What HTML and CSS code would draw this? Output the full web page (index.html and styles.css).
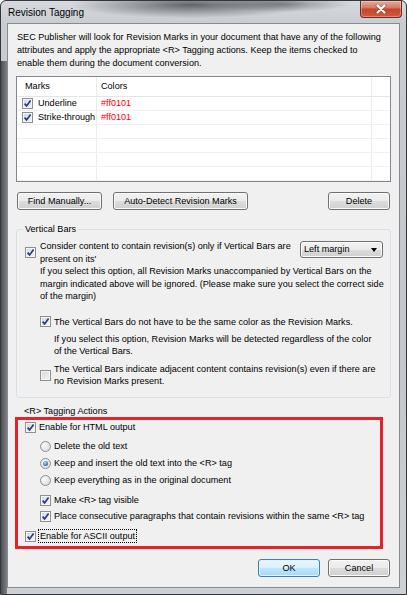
FILE: index.html
```html
<!DOCTYPE html>
<html>
	<head>
		<meta charset="UTF-8">
		<title>Revision Tagging</title>
		<link rel="stylesheet" href="styles.css">
	</head>
	<body>
		<div class="window">
			<div class="titlebar">
				<span class="title">Revision Tagging</span>
				<div class="close">
					<svg width="12" height="10" viewBox="0 0 12 10"><path d="M2 1.5 L10 8.5 M10 1.5 L2 8.5" stroke="#5a1c12" stroke-width="3.2" stroke-linecap="round" opacity=".35"/><path d="M2.5 1.5 L9.5 8.5 M9.5 1.5 L2.5 8.5" stroke="#fff" stroke-width="2.2" stroke-linecap="round"/></svg>
				</div>
			</div>
			<div class="client">
				<p class="intro">SEC Publisher will look for Revision Marks in your document that have any of the following<br>attributes and apply the appropriate &lt;R&gt; Tagging actions. Keep the items checked to<br>enable them during the document conversion.</p>

				<!-- marks list -->
				<div class="listview">
					<div class="lv-row lv-head">
						<div class="c1">Marks</div>
						<div class="c2">Colors</div>
						<div class="c3"></div>
					</div>
					<div class="lv-row">
						<div class="c1"><span class="cb on"><svg viewBox="0 0 9 9"><path d="M1.6 4.6 L3.6 6.9 L7.6 1.6"/></svg></span>Underline</div>
						<div class="c2 red">#ff0101</div>
						<div class="c3"></div>
					</div>
					<div class="lv-row">
						<div class="c1"><span class="cb on"><svg viewBox="0 0 9 9"><path d="M1.6 4.6 L3.6 6.9 L7.6 1.6"/></svg></span>Strike-through</div>
						<div class="c2 red">#ff0101</div>
						<div class="c3"></div>
					</div>
					<div class="lv-row"><div class="c1"></div><div class="c2"></div><div class="c3"></div></div>
					<div class="lv-row"><div class="c1"></div><div class="c2"></div><div class="c3"></div></div>
					<div class="lv-row"><div class="c1"></div><div class="c2"></div><div class="c3"></div></div>
					<div class="lv-row"><div class="c1"></div><div class="c2"></div><div class="c3"></div></div>
				</div>

				<div class="btnrow">
					<div class="btn find">Find Manually...</div>
					<div class="btn auto">Auto-Detect Revision Marks</div>
					<div class="btn del">Delete</div>
				</div>

				<!-- vertical bars -->
				<div class="group">
					<div class="group-label">Vertical Bars</div>
					<div class="opt opt-top">
						<span class="cb on"><svg viewBox="0 0 9 9"><path d="M1.6 4.6 L3.6 6.9 L7.6 1.6"/></svg></span>
						<span class="txt">Consider content to contain revision(s) only if Vertical Bars are<br>present on its'</span>
						<div class="combo"><span>Left margin</span><span class="arrow"></span></div>
					</div>
					<p class="note note1">If you select this option, all Revision Marks unaccompanied by Vertical Bars on the<br>margin indicated above will be ignored. (Please make sure you select the correct side<br>of the margin)</p>
					<div class="opt opt-sub opt2">
						<span class="cb on"><svg viewBox="0 0 9 9"><path d="M1.6 4.6 L3.6 6.9 L7.6 1.6"/></svg></span>
						<span class="txt">The Vertical Bars do not have to be the same color as the Revision Marks.</span>
					</div>
					<p class="note note2">If you select this option, Revision Marks will be detected regardless of the color<br>of the Vertical Bars.</p>
					<div class="opt opt-sub opt3">
						<span class="cb"></span>
						<span class="txt">The Vertical Bars indicate adjacent content contains revision(s) even if there are<br>no Revision Marks present.</span>
					</div>
				</div>

				<!-- tagging actions -->
				<div class="tag-label">&lt;R&gt; Tagging Actions</div>
				<div class="redbox">
					<div class="line l1"><span class="cb on"><svg viewBox="0 0 9 9"><path d="M1.6 4.6 L3.6 6.9 L7.6 1.6"/></svg></span>Enable for HTML output</div>
					<div class="line sub l2"><span class="rb"></span>Delete the old text</div>
					<div class="line sub l3"><span class="rb on"></span>Keep and insert the old text into the &lt;R&gt; tag</div>
					<div class="line sub l4"><span class="rb"></span>Keep everything as in the original document</div>
					<div class="line sub l5"><span class="cb on"><svg viewBox="0 0 9 9"><path d="M1.6 4.6 L3.6 6.9 L7.6 1.6"/></svg></span>Make &lt;R&gt; tag visible</div>
					<div class="line sub l6"><span class="cb on"><svg viewBox="0 0 9 9"><path d="M1.6 4.6 L3.6 6.9 L7.6 1.6"/></svg></span>Place consecutive paragraphs that contain revisions within the same &lt;R&gt; tag</div>
					<div class="line l7"><span class="cb on"><svg viewBox="0 0 9 9"><path d="M1.6 4.6 L3.6 6.9 L7.6 1.6"/></svg></span><span class="focus">Enable for ASCII output</span></div>
				</div>

				<div class="footer">
					<div class="btn ok">OK</div>
					<div class="btn cancel">Cancel</div>
				</div>
			</div>
		</div>
	</body>
</html>
```
FILE: styles.css
```css
body {
	margin: 0;
	font-family: "Liberation Sans", Arial, sans-serif;
	font-size: 9.1px;
	color: #000;
}

.window {
	width: 407px;
	height: 595px;
	box-sizing: border-box;
	border: 1px solid #33373c;
	border-radius: 6px 6px 0 0;
	background:
		radial-gradient(ellipse 120px 13px at 190px 4px, rgba(60, 63, 68, .75), rgba(60, 63, 68, 0)),
		radial-gradient(ellipse 70px 8px at 280px 3px, rgba(60, 63, 68, .5), rgba(60, 63, 68, 0)),
		linear-gradient(90deg, #4c5055 0, #7d8186 6px, rgba(0, 0, 0, 0) 6px) 0 60px / 7px 100% no-repeat,
		linear-gradient(#d6d9dd 0, #c9cdd2 22px, #c3c7cc 60%, #cdd0d4 100%);
}

.titlebar {
	height: 22px;
	display: flex;
	align-items: flex-start;
	justify-content: space-between;
}

.title {
	font-size: 10px;
	line-height: 12px;
	margin: 6px 0 0 7px;
}

.close {
	width: 42px;
	height: 17px;
	margin-right: 4px;
	box-sizing: border-box;
	border: 1px solid #6a2c22;
	border-top: none;
	border-radius: 0 0 4px 4px;
	background: linear-gradient(#eaa898 0, #d97c68 40%, #c6462d 52%, #cf5b3e 100%);
	box-shadow: inset 0 0 0 1px rgba(255, 255, 255, .3);
	display: flex;
	align-items: center;
	justify-content: center;
}

.client {
	margin-left: 6px;
	width: 393px;
	height: 565px;
	box-sizing: border-box;
	border: 1px solid #868b91;
	background: #f0f0f0;
}

.intro {
	margin: 0;
	padding: 6.5px 0 0 9px;
	line-height: 13px;
	white-space: nowrap;
}

/* list */
.listview {
	margin: 6.5px 8px 0;
	border: 1px solid #828790;
	background: #fff;
}

.lv-row {
	display: flex;
	height: 14px;
	box-sizing: border-box;
	border-bottom: 1px solid #f0f0f0;
}

.lv-row > div {
	display: flex;
	align-items: center;
	box-sizing: border-box;
	line-height: 13px;
	white-space: nowrap;
}

.lv-head {
	height: 20px;
	border-bottom: 1px solid #e5e5e5;
}

.c1 {
	width: 80px;
	padding-left: 5px;
	border-right: 1px solid #ececec;
}

.lv-head .c1 {
	padding-left: 8px;
}

.c2 {
	width: 275px;
	padding-left: 4px;
	border-right: 1px solid #ececec;
}

.c3 {
	flex: 1;
}

.red {
	color: #ff0101;
}

.c1 .cb {
	margin-right: 5px;
}

/* checkbox and radio */
.cb {
	flex: none;
	width: 11px;
	height: 11px;
	box-sizing: border-box;
	border: 1px solid #8e8f8f;
	background: linear-gradient(135deg, #d3d6da, #f6f6f6);
	box-shadow: inset 0 0 0 1px #f6f6f6;
	display: inline-flex;
	align-items: center;
	justify-content: center;
}

.cb svg {
	width: 9px;
	height: 9px;
}

.cb path {
	fill: none;
	stroke: #243c86;
	stroke-width: 1.7;
}

.rb {
	flex: none;
	width: 11px;
	height: 11px;
	box-sizing: border-box;
	border: 1px solid #8e8f8f;
	border-radius: 50%;
	background: radial-gradient(circle at 35% 35%, #fbfbfb, #d2d4d8);
	display: inline-flex;
	align-items: center;
	justify-content: center;
}

.rb.on::after {
	content: "";
	width: 5px;
	height: 5px;
	border-radius: 50%;
	background: radial-gradient(circle at 40% 35%, #b6def8, #2a6db0 70%, #1a4f8c);
}

/* buttons */
.btn {
	height: 18px;
	box-sizing: border-box;
	border: 1px solid #707070;
	border-radius: 3px;
	background: linear-gradient(#f2f2f2 0, #ebebeb 50%, #dddddd 51%, #cfcfcf 100%);
	box-shadow: inset 0 0 0 1px #fbfbfb;
	line-height: 16px;
	text-align: center;
}

.btnrow {
	display: flex;
	margin: 10px 9px 0;
}

.find {
	width: 85px;
}

.auto {
	width: 135px;
	margin-left: 11px;
}

.del {
	width: 62px;
	margin-left: auto;
}

/* group box */
.group {
	margin: 19px 8px 0;
	padding-bottom: 9px;
	border: 1px solid #d5dfe5;
	border-radius: 3px;
}

.group-label {
	width: max-content;
	margin: -7px 0 0 6px;
	padding: 0 2px;
	line-height: 12.5px;
	background: #f0f0f0;
}

.opt {
	display: flex;
	align-items: center;
	line-height: 12.5px;
	white-space: nowrap;
}

.opt .txt {
	margin-left: 4px;
}

.opt-top {
	margin-top: 4.5px;
	padding-left: 8px;
	align-items: flex-start;
}

.opt-top .cb {
	margin-top: 7px;
}

.combo {
	width: 83px;
	height: 17px;
	box-sizing: border-box;
	margin: 1px 7px 0 auto;
	padding: 0 5px 0 3px;
	border: 1px solid #707070;
	border-radius: 3px;
	background: linear-gradient(#f2f2f2 0, #ebebeb 50%, #dddddd 51%, #cfcfcf 100%);
	box-shadow: inset 0 0 0 1px #fbfbfb;
	display: flex;
	align-items: center;
	justify-content: space-between;
	line-height: 15px;
}

.arrow {
	width: 0;
	height: 0;
	border-left: 3.5px solid transparent;
	border-right: 3.5px solid transparent;
	border-top: 4px solid #000;
}

.note {
	margin: 0;
	line-height: 12.5px;
	white-space: nowrap;
}

.note1 {
	margin-left: 23px;
}

.opt-sub {
	padding-left: 23px;
	align-items: center;
}

.opt-sub .txt {
	margin-left: 3px;
}

.opt2 {
	margin-top: 13px;
}

.note2 {
	margin: 4.5px 0 0 37px;
}

.opt3 {
	margin-top: 5px;
}

/* tagging actions */
.tag-label {
	margin: 7px 0 0 16px;
	line-height: 12.5px;
}

.redbox {
	width: 368px;
	box-sizing: border-box;
	margin-left: 7px;
	padding: 0 0 3.5px;
	border: 3px solid #e3232b;
}

.line {
	display: flex;
	align-items: center;
	height: 13px;
	padding-left: 7px;
	white-space: nowrap;
}

.line > .cb,
.line > .rb {
	margin-right: 3px;
}

.line.sub {
	padding-left: 22px;
}

.l1 { margin-top: 0.5px; }
.l2 { margin-top: 6px; }
.l3 { margin-top: 4px; }
.l4 { margin-top: 4px; }
.l5 { margin-top: 7px; }
.l6 { margin-top: 3px; }
.l7 { margin-top: 7px; }

.focus {
	outline: 1px dotted #000;
	outline-offset: 0;
	padding: 0 1px;
	line-height: 12px;
}

.footer {
	display: flex;
	justify-content: flex-end;
	gap: 8px;
	margin: 10px 9px 0;
}

.ok,
.cancel {
	width: 62px;
}

.ok {
	border-color: #3c7fb1;
	background: linear-gradient(#eaf6fd 0, #d9f0fc 50%, #bee6fd 51%, #a7d9f5 100%);
	box-shadow: inset 0 0 0 1px #def3fc;
}
```
